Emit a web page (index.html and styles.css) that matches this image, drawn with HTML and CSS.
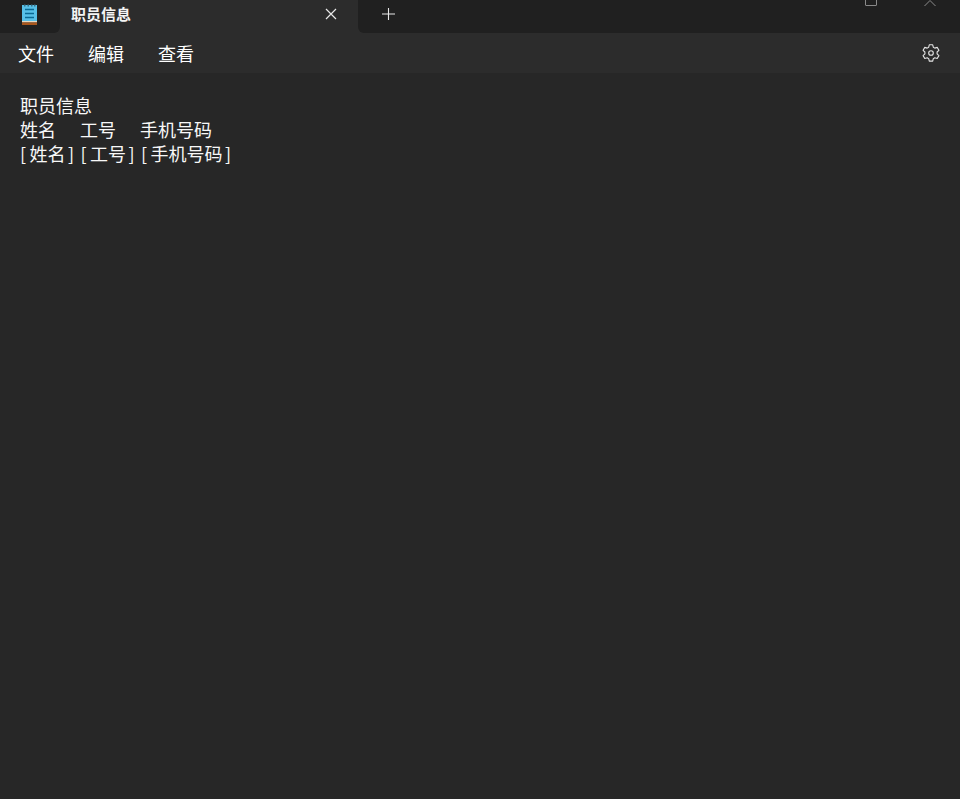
FILE: index.html
```html
<!DOCTYPE html>
<html lang="zh-CN">
<head>
<meta charset="utf-8">
<title>职员信息</title>
<link rel="stylesheet" href="styles.css">
</head>
<body>
<div class="window">
  <header class="titlebar">
    <div class="app-slot">
      <svg class="app-icon" width="18" height="24" viewBox="0 0 18 24">
        <rect x="1" y="3" width="15" height="16" fill="#57c0e8"/>
        <rect x="1" y="19" width="15" height="1.5" fill="#e8d8c0"/>
        <rect x="1" y="20.5" width="15" height="2.5" fill="#a8561c"/>
        <path d="M3 3.5h1.5M6.5 3.5h1.5M10 3.5h1.5M13 3.5h1.5" stroke="#3a6f85" stroke-width="2"/>
        <path d="M4 7.5h9M4 11.5h9M4 15.5h9" stroke="#0b6a94" stroke-width="1.6"/>
      </svg>
    </div>
    <div class="tab">
      <span class="tab-title">职员信息</span>
      <svg class="tab-close" width="12" height="12" viewBox="0 0 12 12"><path d="M1 1l10 10M11 1L1 11" stroke="#e8e8e8" stroke-width="1.2" fill="none"/></svg>
    </div>
    <div class="strip">
      <svg class="new-tab" width="13" height="12" viewBox="0 0 13 12"><path d="M6.500 0v12M0 6h13" stroke="#e8e8e8" stroke-width="1.100" fill="none"/></svg>
      <div class="win-controls">
        <svg class="win-max" width="12" height="6" viewBox="0 0 12 6"><path d="M1 -6h10a.5.5 0 0 1 .5.5V5a.5.5 0 0 1-.5.5H1A.5.5 0 0 1 .5 5V-5.500z" stroke="#8a8a8a" fill="none"/></svg>
        <svg class="win-close" width="14" height="6" viewBox="0 0 14 6"><path d="M1.500 6l5.500-5.500L12.500 6" stroke="#8a8a8a" fill="none"/></svg>
      </div>
    </div>
  </header>
  <nav class="menubar">
    <ul class="menu">
      <li>文件</li>
      <li>编辑</li>
      <li>查看</li>
    </ul>
    <svg class="gear" width="20" height="20" viewBox="0 0 20 20"><path d="M8.300 1.800h3.400l.6 2.400 1.500.9 2.400-.7 1.700 2.900-1.800 1.700v1.900l1.800 1.700-1.700 2.900-2.400-.7-1.500.9-.6 2.400H8.300l-.6-2.400-1.500-.9-2.400.7-1.700-2.900 1.800-1.700V9l-1.800-1.700 1.700-2.900 2.400.7 1.500-.9z" stroke="#e4e4e4" stroke-width="1.100" stroke-linejoin="round" fill="none"/><circle cx="10" cy="10" r="2.300" stroke="#e4e4e4" stroke-width="1.100" fill="none"/></svg>
  </nav>
  <main class="editor">
    <div class="line">职员信息</div>
    <div class="line">姓名	工号	手机号码</div>
    <div class="line fields">
      <div class="group"><span>[</span><span class="field">姓名</span><span>]</span></div>
      <div class="group"><span>[</span><span class="field">工号</span><span>]</span></div>
      <div class="group"><span>[</span><span class="field">手机号码</span><span>]</span></div>
    </div>
  </main>
</div>
</body>
</html>
```
FILE: styles.css
```css
* { box-sizing: border-box; }
html, body { margin: 0; height: 100%; background: #272727; }
body { font-family: "Noto Sans CJK SC", "Liberation Sans", sans-serif; color: #fff; overflow: hidden; }
.window { display: flex; flex-direction: column; height: 799px; width: 960px; }
.titlebar { display: flex; height: 33px; background: #2c2c2c; flex: none; }
.app-slot { width: 60px; background: #202020; border-bottom-right-radius: 6px; padding: 2px 0 0 21px; }
.app-icon { display: block; }
.tab { width: 298px; display: flex; align-items: center; justify-content: space-between; padding: 0 21px 5px 11px; background: #2c2c2c; }
.tab-title { font-size: 15px; font-weight: 700; line-height: 20px; color: #f4f4f4; margin-top: -1px; }
.strip { flex: 1; display: flex; justify-content: space-between; background: #202020; border-bottom-left-radius: 6px; padding-left: 24px; }
.new-tab { margin-top: 8px; }
.win-controls { display: flex; gap: 46px; padding-right: 23px; }
.menubar { display: flex; align-items: center; justify-content: space-between; height: 40px; flex: none; background: #2c2c2c; padding: 0 19px 0 18px; }
.menu { display: flex; gap: 34px; list-style: none; margin: 0; padding: 0; font-size: 18px; line-height: 24px; }
.editor { flex: 1; background: #272727; padding: 20px 20px 0; font-size: 18px; line-height: 24px; color: #f8f8f8; }
.line { height: 24px; white-space: pre; tab-size: 60px; }
.fields { display: flex; gap: 6.300px; }
.group { display: flex; }
.field { margin: 0 2.500px 0 3.500px; }
```
